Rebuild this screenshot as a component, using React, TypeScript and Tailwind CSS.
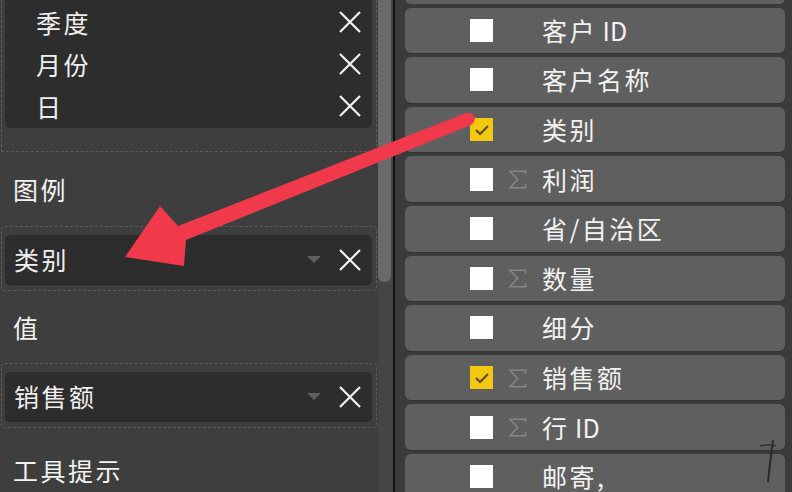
import React from "react";

const font = { fontFamily: '"Noto Sans CJK SC", "Noto Sans", sans-serif' };

function XIcon() {
  return (
    <svg width="24" height="22" viewBox="0 0 24 22" className="shrink-0">
      <path d="M2 1 L22 21 M22 1 L2 21" stroke="#f2f2f2" strokeWidth="2.2" fill="none" />
    </svg>
  );
}

function Caret() {
  return (
    <svg width="14" height="8" viewBox="0 0 14 8" className="shrink-0">
      <path d="M0 0 L14 0 L7 7 Z" fill="#5f5f5f" />
    </svg>
  );
}

function Sigma() {
  return (
    <svg width="19" height="19" viewBox="0 0 19 19">
      <path d="M17.5 4.5 V1.2 H2 L9.6 9.5 L2 17.8 H17.5 V14.5" stroke="#858585" strokeWidth="1.6" fill="none" strokeLinejoin="miter" />
    </svg>
  );
}

function FieldWell({ label }: { label: string }) {
  return (
    <div className="shrink-0 ml-[1px] w-[376px] h-[65px] border border-dashed border-[#5c5c5c] rounded-[4px] pl-[3px] pr-[4px] pt-[8px]">
      <div className="h-[49px] bg-[#2d2d2d] rounded-[5px] flex items-center pl-[9px] pr-[10px] shadow-[0_1px_0_#262626]">
        <span className="text-[25px] tracking-[2.5px] text-[#efefef] flex-1 leading-none">{label}</span>
        <div className="mr-[17px]"><Caret /></div>
        <XIcon />
      </div>
    </div>
  );
}

function Label({ text, h }: { text: string; h: number }) {
  return (
    <div className="shrink-0 flex items-center pl-[13px]" style={{ height: h }}>
      <span className="text-[25px] tracking-[2.5px] text-[#f2f2f2] leading-none">{text}</span>
    </div>
  );
}

function Check({ checked }: { checked?: boolean }) {
  if (checked) {
    return (
      <div className="w-[23px] h-[23px] bg-[#f2c811] flex items-center justify-center shrink-0">
        <svg width="16" height="12" viewBox="0 0 16 12">
          <path d="M2 6 L6 10 L14 2" stroke="#5b4712" strokeWidth="2" fill="none" />
        </svg>
      </div>
    );
  }
  return <div className="w-[23px] h-[23px] bg-white shrink-0" />;
}

const rows: { label: string; latin?: string; checked?: boolean; sigma?: boolean }[] = [
  { label: "客户", latin: " ID" },
  { label: "客户名称" },
  { label: "类别", checked: true },
  { label: "利润", sigma: true },
  { label: "省/自治区" },
  { label: "数量", sigma: true },
  { label: "细分" },
  { label: "销售额", checked: true, sigma: true },
  { label: "行", latin: " ID", sigma: true },
  { label: "邮寄," },
];

export default function App() {
  return (
    <div className="relative w-[792px] h-[492px] overflow-hidden flex bg-[#3e3e3e]" style={font}>
      {/* Left panel */}
      <div className="w-[393px] h-full flex bg-[#3e3e3e]">
        <div className="w-[378px] flex flex-col">
          {/* well 1 */}
          <div className="shrink-0 ml-[1px] w-[376px] h-[152px] border-b border-l border-r border-dashed border-[#5c5c5c] pl-[3px] pr-[4px]">
            <div className="h-[128px] bg-[#2d2d2d] rounded-b-[6px] pt-[1px]">
              {["季度", "月份", "日"].map((t) => (
                <div key={t} className="h-[42px] flex items-center pl-[31px] pr-[10px]">
                  <span className="flex-1 text-[25px] tracking-[2.5px] text-[#efefef] leading-none">{t}</span>
                  <XIcon />
                </div>
              ))}
            </div>
          </div>
          <Label text="图例" h={74} />
          <FieldWell label="类别" />
          <Label text="值" h={72} />
          <FieldWell label="销售额" />
          <Label text="工具提示" h={84} />
        </div>
        <div className="w-[13px] h-full bg-[#454545]">
          <div className="h-[282px] bg-[#6a6a6a] rounded-b-[6px]" />
        </div>
        <div className="w-[2px] h-full bg-[#474747]" />
      </div>
      <div className="w-[2px] h-full bg-[#111111]" />
      {/* Right panel */}
      <div className="flex-1 h-full bg-[#3b3b3b] pl-[10px] pr-[7px]">
        <div className="flex flex-col gap-[4px] mt-[-42px]">
          <div className="shrink-0 h-[45.6px] bg-[#5f5f5f] rounded-[6px]" />
          {rows.map((r) => (
            <div key={r.label + (r.latin ?? "")} className="shrink-0 h-[45.6px] bg-[#5f5f5f] rounded-[6px] flex items-center pl-[65px] shadow-[0_1px_0_#333]">
              <Check checked={r.checked} />
              <div className="w-[49px] h-[26px] flex items-center justify-center pt-[1px]">
                {r.sigma && <Sigma />}
              </div>
              <span className="text-[25px] text-[#f2f2f2] leading-none whitespace-pre">
                <span className="tracking-[2.5px]">{r.label}</span>
                {r.latin && <span>{r.latin}</span>}
              </span>
            </div>
          ))}
        </div>
      </div>

      {/* Red arrow overlay */}
      <svg className="absolute left-0 top-0 pointer-events-none" width="792" height="492" viewBox="0 0 792 492">
        <polygon
          points="466,113 178,226 160,206 125,257 184,266 186,240 471,125"
          fill="#f0394b"
        />
        <circle cx="468.5" cy="119" r="6.2" fill="#f0394b" />
        <path d="M773 440 Q 770 462 768 482" stroke="#2a2a2a" strokeWidth="2" fill="none" />
        <path d="M760 446 Q 768 444 776 446" stroke="#333" strokeWidth="1.5" fill="none" />
      </svg>
    </div>
  );
}
